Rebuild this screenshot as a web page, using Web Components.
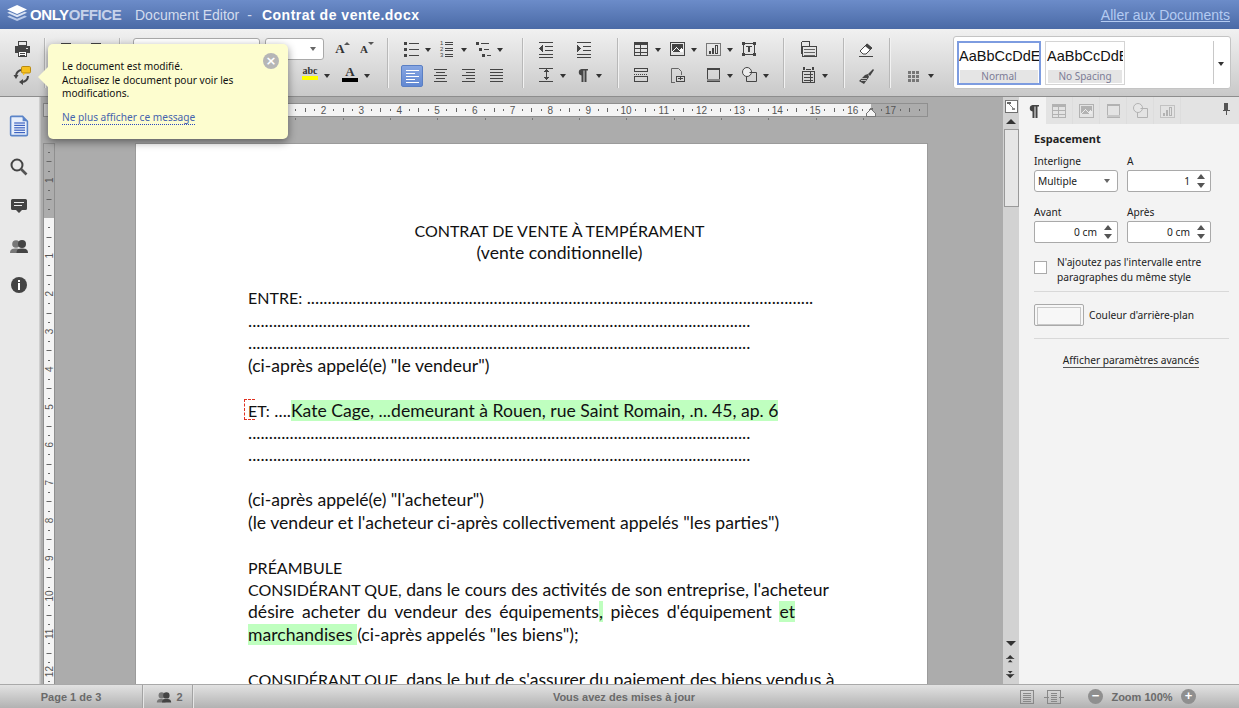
<!DOCTYPE html>
<html lang="fr">
<head>
<meta charset="utf-8">
<title>ONLYOFFICE Document Editor</title>
<style>
  html, body { margin: 0; height: 100%; overflow: hidden; }
  oo-app { height: 708px; }
</style>
</head>
<body>
<oo-app></oo-app>
<script>
const UI_FONT = `"Noto Sans", "Liberation Sans", sans-serif`
const DARK = "#444"

// Little helpers for the icon markup.
const hl = (y, x1, x2, c = DARK) => `<rect x="${x1}" y="${y}" width="${x2 - x1}" height="1" fill="${c}"/>`
const box = (x, y, w, h, c = DARK) => `<rect x="${x}.5" y="${y}.5" width="${w - 1}" height="${h - 1}" fill="none" stroke="${c}"/>`
const fill = (x, y, w, h, c = DARK) => `<rect x="${x}" y="${y}" width="${w}" height="${h}" fill="${c}"/>`
const lines = (ys, x1, x2, c) => ys.map(y => hl(y, x1, x2, c)).join("")
const tiny = (x, y, t) => `<text x="${x}" y="${y}" font-family="Liberation Sans, sans-serif" font-size="6" fill="${DARK}">${t}</text>`

const ICONS = {
  print: box(6, 2, 9, 5) + fill(3, 7, 15, 7) + fill(14, 9, 2, 1, "#ddd") + fill(6, 12, 9, 6, "#fff") + box(6, 12, 9, 6) + hl(14, 8, 13) + hl(16, 8, 13),
  sync: `<path d="M10 5a6 6 0 0 0-6 6M16 11a6 6 0 0 1-6 6" fill="none" stroke="${DARK}" stroke-width="2"/><path d="M1.500 10h5L4 14zM11 14v6l-4-3z" fill="${DARK}"/><rect x="9.500" y="1.500" width="9" height="6.500" rx="1.200" fill="#f5c020" stroke="#b98a10"/><path d="M11 8v2.500L14 8z" fill="#f5c020"/>`,
  behind: fill(5, 4, 10, 2),
  bullets: [3, 9, 15].map(y => fill(3, y, 3, 3) + hl(y + 1, 8, 18)).join(""),
  numbers: tiny(3, 6, 1) + tiny(3, 12, 2) + tiny(3, 18, 3) + lines([3, 5, 9, 11, 15, 17], 8, 16),
  multi: fill(3, 3, 3, 3) + hl(4, 8, 16) + fill(6, 9, 3, 3) + hl(10, 11, 16) + fill(9, 15, 3, 3) + hl(16, 14, 18),
  left: hl(4, 4, 17, "#fff") + hl(7, 4, 13, "#fff") + hl(10, 4, 17, "#fff") + hl(13, 4, 13, "#fff") + hl(16, 4, 17, "#fff"),
  center: hl(4, 4, 17) + hl(7, 6, 15) + hl(10, 4, 17) + hl(13, 6, 15) + hl(16, 4, 17),
  right: hl(4, 4, 17) + hl(7, 8, 17) + hl(10, 4, 17) + hl(13, 8, 17) + hl(16, 4, 17),
  justify: lines([4, 7, 10, 13, 16], 4, 17),
  outdent: lines([3, 15, 18], 3, 17) + hl(7, 9, 17) + hl(11, 9, 17) + `<path d="M7 6v7l-4-3.500z" fill="${DARK}"/>`,
  indent: lines([3, 15, 18], 3, 17) + hl(7, 9, 17) + hl(11, 9, 17) + `<path d="M3 6v7l4-3.500z" fill="${DARK}"/>`,
  spacing: hl(3, 3, 17) + hl(16, 3, 17) + fill(10, 5, 1, 9) + `<path d="M10.500 4l-2.500 3h5zM10.500 15l-2.500-3h5z" fill="${DARK}"/>`,
  para: `<path d="M8 4h8v1.500h-1.500V17h-2V5.500h-1V17h-2v-6.500a3.300 3.300 0 0 1 0-6.500z" fill="${DARK}"/>`,
  table: box(3, 3, 14, 14) + fill(3, 3, 14, 3) + hl(9, 3, 17) + hl(13, 3, 17) + fill(9, 3, 1, 14),
  image: box(3, 3, 15, 14) + fill(5, 5, 11, 8) + `<path d="M5 13l4-5 3 3 2-2 2 2v2z" fill="#fff"/><path d="M6 13l3-4 4 4z" fill="${DARK}"/>`,
  chart: box(3, 4, 15, 13, "#777") + fill(6, 12, 2, 3) + fill(9, 9, 2, 6) + box(12, 6, 3, 9),
  textbox: box(4, 4, 12, 12) + fill(3, 3, 3, 3) + fill(14, 3, 3, 3) + fill(3, 14, 3, 3) + fill(14, 14, 3, 3) + hl(7, 7, 13) + fill(9, 7, 2, 6),
  columns: box(3, 11, 14, 6) + box(3, 3, 14, 4) + `<path d="M3 9.500h14" stroke="${DARK}" stroke-dasharray="1 1"/>`,
  pagebreak: `<path d="M4.500 17.500V3.500h7l3 3V10" fill="none" stroke="#666"/>` + hl(17, 4, 8, "#666") + box(9, 11, 9, 6) + hl(13, 11, 16) + fill(13, 12, 1, 3),
  header: box(4, 3, 13, 14) + fill(4, 3, 13, 2) + fill(4, 14, 13, 2, "#888"),
  shape: `<circle cx="8" cy="7" r="4.500" fill="#eee" stroke="${DARK}"/><path d="M10.500 7.500h7v9h-10v-5" fill="none" stroke="${DARK}"/>`,
  merge: box(4, 7, 15, 11) + lines([10, 13, 16], 6, 17, "#666") + `<path d="M3.500 2.500h8v4" fill="none" stroke="${DARK}"/>` + fill(3, 3, 1, 12),
  mailmerge: fill(5, 2, 2, 3) + fill(14, 2, 2, 3) + hl(4, 8, 13) + box(4, 6, 13, 12) + lines([9, 12, 15], 6, 15) + fill(12, 6, 1, 12),
  eraser: `<path d="M4 12l7-7 5 4-6 6H7z" fill="#fff" stroke="${DARK}"/><path d="M9 7l2-2.500 5 4.500-2 2z" fill="${DARK}"/>` + hl(17, 3, 17),
  brush: `<path d="M12 9l2 2 4-6-1-1zM12 9l-3 1-6 6 5 3 5-7z" fill="${DARK}"/>` + hl(13, 5, 11, "#bbb") + hl(15, 5, 10, "#bbb"),
  grid: [6, 10, 14].map(y => [4, 8, 12].map(x => fill(x, y, 3, 3, "#777")).join("")).join(""),
  pin: fill(8, 3, 5, 8, "#555") + fill(6, 11, 9, 2, "#555") + fill(10, 13, 1, 5, "#555"),
  fit: fill(2, 2, 16, 16, "#fff") + box(2, 2, 16, 16, "#555") + fill(5, 5, 5, 3, "#666") + fill(11, 12, 4, 3, "#888") + `<path d="M8 8l5 5" stroke="#666"/>`,
  plain: box(3, 3, 14, 14, "#888") + lines([6, 8, 10, 12, 14], 6, 14, "#888"),
  wide: box(3, 3, 14, 14, "#888") + lines([6, 8, 10, 12, 14], 7, 13, "#888") + hl(10, 0, 5, "#888") + hl(10, 15, 20, "#888"),
  filepane: `<path d="M3 3a1 1 0 0 1 1-1h9l4 4v11a1 1 0 0 1-1 1H4a1 1 0 0 1-1-1z" fill="#e8effb" stroke="#5b84c8" stroke-width="1.300"/><path d="M13 2v4h4z" fill="#5b84c8"/>` + lines([7, 9, 11, 13, 15], 6, 15, "#3e63c0"),
  search: `<circle cx="8" cy="8" r="5.500" fill="none" stroke="${DARK}" stroke-width="2"/><path d="M12 12l5.500 5.500" stroke="#555" stroke-width="2.600"/>`,
  comment: `<path d="M2 4.500a1.500 1.500 0 0 1 1.500-1.500h13a1.500 1.500 0 0 1 1.500 1.500v8a1.500 1.500 0 0 1-1.500 1.500H13l-3 3-3-3H3.500A1.500 1.500 0 0 1 2 12.500z" fill="${DARK}"/>` + hl(6, 5, 15, "#eee") + hl(9, 5, 13, "#eee"),
  people: `<circle cx="7" cy="8" r="3.800" fill="#777"/><path d="M1 17c0-4 3-4.500 6-4.500s5 1 5 4.500z" fill="#777"/><circle cx="13" cy="8" r="4" fill="${DARK}"/><path d="M7.500 17c0-4 2.500-4.500 5.500-4.500s6 .5 6 4.500z" fill="${DARK}"/>`,
  info: `<circle cx="10" cy="10" r="8" fill="${DARK}"/>` + fill(9, 5, 2, 2, "#fff") + fill(9, 8, 2, 7, "#fff"),
  pageup: `<path d="M5 9l4-4 4 4z" fill="#333"/>` + fill(4, 9, 10, 1, "#333") + `<path d="M6 14l3-3 3 3z" fill="#333"/>`,
  pagedown: `<path d="M6 5l3 3 3-3z" fill="#333"/>` + fill(4, 9, 10, 1, "#333") + `<path d="M5 10l4 4 4-4z" fill="#333"/>`,
  logo: `<path d="M11 1l9 4-9 4-9-4z" fill="#fff"/><path d="M2 8l2-1 7 3 7-3 2 1-9 4z" fill="#dbe4f4"/><path d="M2 11.500l2-1 7 3 7-3 2 1-9 4z" fill="#b9c9e8"/>`
}

function icon(name, size = 20) {
  return `<svg width="${size}" height="${size}" viewBox="0 0 20 20" shape-rendering="${/sync|para|shape|eraser|brush|filepane|search|comment|people|info|logo|page/.test(name) ? "auto" : "crispEdges"}">${ICONS[name] || ""}</svg>`
}

function define(name, css, html, init) {
  // Every element here is the same thing: a shadow root with its own style.
  customElements.define(name, class extends HTMLElement {
    constructor() {
      super()
      this.attachShadow({ mode: "open" })
    }

    connectedCallback() {
      const markup = typeof html === "function" ? html(this) : html
      this.shadowRoot.innerHTML = `<style>${css}</style>${markup}`
      if (init) {
        init(this)
      }
    }
  })
}

define("oo-icon", `:host { display: inline-flex; }`, el => icon(el.getAttribute("name"), +el.getAttribute("size") || 20))

define("oo-caret", `
  :host { display: inline-block; width: 0; height: 0; border: 3.500px solid transparent; border-top: 4px solid #333; border-bottom: 0; }
`, "")

define("oo-tool", `
  :host { display: inline-flex; align-items: center; flex: none; height: 26px; position: relative; }
  .glyph { width: 20px; height: 20px; display: flex; }
  oo-caret { position: absolute; left: 24px; top: 12px; }
`, el => `
  <div class="glyph"><slot>${el.hasAttribute("icon") ? icon(el.getAttribute("icon")) : ""}</slot></div>
  ${el.hasAttribute("caret") ? "<oo-caret></oo-caret>" : ""}
`, el => {
  el.style.width = `${el.getAttribute("w") || 36}px`
})

define("oo-row", `:host { display: flex; height: 26px; align-items: center; }`, "<slot></slot>")

define("oo-group", `:host { display: block; flex: none; }`, "<slot></slot>")

define("oo-sep", `
  :host { display: block; flex: none; width: 1px; height: 50px; margin-top: 2px; background: #b8b8b8; box-shadow: 1px 0 0 #f2f2f2; }
`, "")

define("oo-header", `
  :host {
    display: flex; align-items: center; height: 29px; flex: none; padding: 0 9px 0 5px;
    background: linear-gradient(#6c8cc9, #4a6aa6);
    font: 14px "Liberation Sans", sans-serif; color: #d3dcee;
  }
  .logo { display: flex; margin-right: 3px; }
  .brand { font-weight: bold; font-size: 15px; letter-spacing: -0.400px; color: #fff; width: 104px; }
  .brand span { color: #c6d2ea; }
  .dash { margin: 0 7px 0 8px; padding-right: 3px; }
  .title { font-weight: bold; color: #fff; letter-spacing: 0.500px; }
  a { margin-left: auto; color: #b4cbf2; text-decoration: underline; }
`, `
  <div class="logo">${icon("logo", 22)}</div>
  <div class="brand">ONLY<span>OFFICE</span></div>
  <div style="margin-left:1px">Document Editor</div>
  <div class="dash">-</div>
  <div class="title">Contrat de vente.docx</div>
  <a>Aller aux Documents</a>
`)

define("oo-combo", `
  :host {
    display: flex; align-items: center; box-sizing: border-box; height: 22px; flex: none;
    background: #fff; border: 1px solid #a9a9a9; border-radius: 3px; position: relative;
    font: 10.200px ${UI_FONT}; color: #222;
  }
  span { padding-left: 3px; }
  i { position: absolute; right: 7px; top: 8px; border: 3.500px solid transparent; border-top: 4px solid #666; border-bottom: 0; }
`, `<span><slot></slot></span><i></i>`)

define("oo-styles", `
  :host {
    display: flex; box-sizing: border-box; width: 278px; height: 53px; flex: none; background: #fff;
    border: 1px solid #c4c4c4; border-radius: 3px; padding: 4px 3px; gap: 4px; position: relative;
  }
  .more { position: absolute; right: 16px; top: 4px; bottom: 4px; width: 1px; background: #c8c8c8; }
  oo-caret { position: absolute; right: 6px; top: 25px; }
`, `<slot></slot><div class="more"></div><oo-caret></oo-caret>`)

define("oo-style-tile", `
  :host {
    display: flex; flex-direction: column; box-sizing: border-box; height: 44px; flex: none; overflow: hidden;
    border: 1px solid #d4d4d4; padding: 1px;
    font-family: "Liberation Sans", sans-serif;
  }
  :host([on]) { border: 2px solid #7d9ce0; padding: 0; }
  .sample { flex: 1; font-size: 14.500px; line-height: 26px; white-space: nowrap; overflow: hidden; color: #111; }
  .name { height: 13px; margin: 0 1px; background: #e5e5e5; color: #7c7c96; font: 10px/13px ${UI_FONT}; text-align: center; }
`, `<div class="sample">AaBbCcDdEe</div><div class="name"><slot></slot></div>`)

define("oo-toolbar", `
  :host {
    display: flex; flex: none; box-sizing: border-box; height: 68px; padding-top: 7px;
    background: linear-gradient(#f1f1f1, #c9c9c9);
    border-bottom: 1px solid #8d8d8d;
  }
  .serif { font: bold 13px/20px "Liberation Serif", serif; color: #333; position: relative; display: block; width: 20px; text-align: center; }
  .small { font-size: 11px; }
  .up::after, .down::after { content: ""; position: absolute; right: 0; top: 3px; border: 3px solid transparent; }
  .up::after { border-bottom: 3px solid #555; border-top: 0; }
  .down::after { border-top: 3px solid #555; border-bottom: 0; }
  .swatch { display: block; width: 20px; text-align: center; font: bold 10px/11px "Liberation Serif", serif; color: #333; }
  .swatch b { display: block; height: 4px; margin: 0 2px; }
  .big { font-size: 13px; line-height: 13px; }
  .on { width: 22px; height: 22px; margin-left: 3px; margin-right: 3px; box-sizing: border-box; border: 1px solid #5a7fc4; border-radius: 2px; background: linear-gradient(#87a6e2, #6288d2); padding: 0; display: flex; }
`, `
  <oo-group style="width:44px"><oo-row style="padding-left:12px"><oo-tool icon="print" w="20"></oo-tool></oo-row><oo-row style="padding-left:12px"><oo-tool icon="sync" w="20"></oo-tool></oo-row></oo-group>
  <oo-sep></oo-sep>
  <oo-group style="width:74px"><oo-row style="padding-left:11px"><oo-tool icon="behind" w="30"></oo-tool><oo-tool icon="behind" w="20"></oo-tool></oo-row></oo-group>
  <oo-sep></oo-sep>
  <oo-group style="width:267px">
    <oo-row style="padding-left:13px">
      <oo-combo style="width:127px"></oo-combo>
      <oo-combo style="width:59px;margin-left:5px"></oo-combo>
      <oo-tool w="24" style="margin-left:6px"><span class="serif up">A</span></oo-tool>
      <oo-tool w="24"><span class="serif small down">A</span></oo-tool>
    </oo-row>
    <oo-row style="padding-left:180px">
      <oo-tool caret w="40"><span class="swatch">abc<b style="background:#ff0"></b></span></oo-tool>
      <oo-tool caret w="40"><span class="swatch big">A<b style="background:#000"></b></span></oo-tool>
    </oo-row>
  </oo-group>
  <oo-sep></oo-sep>
  <oo-group style="width:134px">
    <oo-row style="padding-left:13px"><oo-tool icon="bullets" caret></oo-tool><oo-tool icon="numbers" caret></oo-tool><oo-tool icon="multi" caret></oo-tool></oo-row>
    <oo-row style="padding-left:10px">
      <oo-tool w="28"><span class="on">${icon("left")}</span></oo-tool>
      <oo-tool w="28" style="padding-left:4px;box-sizing:border-box"><oo-icon name="center"></oo-icon></oo-tool>
      <oo-tool w="28" style="padding-left:4px;box-sizing:border-box"><oo-icon name="right"></oo-icon></oo-tool>
      <oo-tool w="28" style="padding-left:4px;box-sizing:border-box"><oo-icon name="justify"></oo-icon></oo-tool>
    </oo-row>
  </oo-group>
  <oo-sep></oo-sep>
  <oo-group style="width:94px">
    <oo-row style="padding-left:13px"><oo-tool icon="outdent" w="38"></oo-tool><oo-tool icon="indent" w="38"></oo-tool></oo-row>
    <oo-row style="padding-left:13px"><oo-tool icon="spacing" caret></oo-tool><oo-tool icon="para" caret></oo-tool></oo-row>
  </oo-group>
  <oo-sep></oo-sep>
  <oo-group style="width:165px">
    <oo-row style="padding-left:13px"><oo-tool icon="table" caret></oo-tool><oo-tool icon="image" caret></oo-tool><oo-tool icon="chart" caret></oo-tool><oo-tool icon="textbox"></oo-tool></oo-row>
    <oo-row style="padding-left:13px"><oo-tool icon="columns"></oo-tool><oo-tool icon="pagebreak"></oo-tool><oo-tool icon="header" caret></oo-tool><oo-tool icon="shape" caret></oo-tool></oo-row>
  </oo-group>
  <oo-sep></oo-sep>
  <oo-group style="width:59px">
    <oo-row style="padding-left:14px"><oo-tool icon="merge"></oo-tool></oo-row>
    <oo-row style="padding-left:14px"><oo-tool icon="mailmerge" caret></oo-tool></oo-row>
  </oo-group>
  <oo-sep></oo-sep>
  <oo-group style="width:45px">
    <oo-row style="padding-left:12px"><oo-tool icon="eraser" w="20"></oo-tool></oo-row>
    <oo-row style="padding-left:12px"><oo-tool icon="brush" w="20"></oo-tool></oo-row>
  </oo-group>
  <oo-sep></oo-sep>
  <oo-group style="width:63px">
    <oo-row></oo-row>
    <oo-row style="padding-left:14px"><oo-tool icon="grid" caret></oo-tool></oo-row>
  </oo-group>
  <oo-styles>
    <oo-style-tile on style="width:84px">Normal</oo-style-tile>
    <oo-style-tile style="width:80px">No Spacing</oo-style-tile>
  </oo-styles>
`)

define("oo-sidebar", `
  :host {
    display: flex; flex-direction: column; align-items: center; flex: none; box-sizing: border-box;
    width: 40px; padding: 17px 2px 0 0; gap: 19.500px;
    background: #e9e9e9; border-right: 1px solid #cfcfcf;
  }
`, `
  <oo-icon name="filepane" size="24" style="margin-bottom:-1px"></oo-icon>
  <oo-icon name="search"></oo-icon>
  <oo-icon name="comment"></oo-icon>
  <oo-icon name="people"></oo-icon>
  <oo-icon name="info"></oo-icon>
`)

// Rulers are drawn once from the cm step; 37.8px to the centimetre, 0 at the text margin.
const CM = 37.8
const RULER_TEXT = `font-family="Liberation Sans, sans-serif" font-size="10" fill="#555" text-anchor="middle"`

function hRuler() {
  const zero = 113
  let out = `<rect x="0.500" y="0.500" width="792" height="13" fill="none" stroke="#8f8f8f"/>`
  out += `<rect x="${zero}" y="1" width="623" height="12" fill="#f4f4f4"/>`
  for (let i = -2; i <= 18; i++) {
    const x = zero + i * CM
    // Numbers left of 2 sit under the tip, so they are never seen.
    if (i >= 2 && x < 790) {
      out += `<text x="${x}" y="11" ${RULER_TEXT}>${i}</text>`
    }
    for (const [f, h] of [[0.25, 2], [0.5, 4], [0.75, 2]]) {
      const tx = Math.round(x + f * CM)
      if (tx > 2 && tx < 790) {
        out += `<rect x="${tx}" y="${7 - h / 2}" width="1" height="${h}" fill="#666"/>`
      }
    }
  }
  for (let i = 1; i <= 13; i++) {
    out += `<rect x="${Math.round(zero + i * 47.3)}" y="15" width="1" height="2" fill="#777"/>`
  }
  out += `<path d="M731.500 13.500v-3l4.500-5 4.500 5v3z" fill="#f4f4f4" stroke="#777"/>`
  return `<svg width="793" height="18" shape-rendering="crispEdges">${out}</svg>`
}

function vRuler() {
  const zero = 75
  let out = `<rect x="0.500" y="0.500" width="11" height="600" fill="none" stroke="#8f8f8f"/>`
  out += `<rect x="1" y="${zero}" width="10" height="530" fill="#f4f4f4"/>`
  for (let i = -2; i <= 13; i++) {
    const y = zero + i * CM
    if (i !== 0 && y > 5 && i <= 12) {
      out += `<text transform="translate(9.500 ${y}) rotate(-90)" ${RULER_TEXT}>${Math.abs(i)}</text>`
    }
    for (const [f, w] of [[0.25, 2], [0.5, 5], [0.75, 2]]) {
      const ty = Math.round(y + f * CM)
      if (ty > 2) {
        out += `<rect x="${6 - w / 2}" y="${ty}" width="${w}" height="1" fill="#666"/>`
      }
    }
  }
  return `<svg width="12" height="601">${out}</svg>`
}

define("oo-hruler", `
  :host { display: flex; flex: none; height: 46px; box-sizing: border-box; padding: 6px 0 0 2px; }
  .corner { width: 12px; height: 14px; box-sizing: border-box; border: 1px solid #888; background: #c9c9c9; margin-right: 80px; }
  svg { display: block; overflow: visible; }
`, () => `<div class="corner"></div>${hRuler()}`)

define("oo-vruler", `:host { display: block; flex: none; width: 12px; margin-left: 2px; }`, () => vRuler())

define("oo-page", `
  :host {
    display: block; flex: none; box-sizing: border-box; width: 793px; height: 700px; margin-left: 80px;
    padding: 76px 97px 0 112px; background: #fff; border: 1px solid #9b9b9b; border-bottom: 0;
    font: 17.600px/22.450px Lato, "Open Sans", sans-serif; color: #111; white-space: nowrap;
  }
`, "<slot></slot>")

define("oo-line", `
  :host { display: block; height: 22.450px; }
  :host([center]) { text-align: center; width: 623px; }
  :host([just]) { white-space: normal; text-align: justify; text-align-last: justify; }
`, "<slot></slot>")

define("oo-hl", `:host { background: #bfffbf; }`, "<slot></slot>")

define("oo-mark", `
  :host { position: relative; }
  i { position: absolute; left: -4px; top: -2px; width: 10px; height: 19px; border: 1px dashed #e03020; border-right: 0; }
`, "<i></i><slot></slot>")

define("oo-scrollbar", `
  :host {
    display: flex; flex-direction: column; align-items: center; flex: none; width: 16px;
    background: #d2d2d2; position: relative;
  }
  .fit { height: 16px; margin-top: 1px; }
  .up { margin-top: 5px; border: 5px solid transparent; border-top: 0; border-bottom: 5px solid #333; }
  .thumb { box-sizing: border-box; width: 15px; height: 78px; margin-top: 5px; background: #e6e6e6; border: 1px solid #999; }
  .down { margin-top: auto; border: 5px solid transparent; border-bottom: 0; border-top: 5px solid #333; }
  .pg { height: 16px; display: flex; }
  .pg:last-child { margin-bottom: 1px; }
`, `
  <div class="fit">${icon("fit", 16)}</div>
  <div class="up"></div>
  <div class="thumb"></div>
  <div class="down" style="margin-bottom:5px"></div>
  <div class="pg">${icon("pageup", 16)}</div>
  <div class="pg">${icon("pagedown", 16)}</div>
`)

define("oo-spin", `
  :host {
    display: flex; align-items: center; justify-content: flex-end; box-sizing: border-box; height: 22px;
    border: 1px solid #a9a9a9; border-radius: 2px; background: #fff; padding-right: 20px; position: relative;
  }
  .ar { position: absolute; right: 5px; width: 0; border: 4px solid transparent; }
  .u { top: 3px; border-top: 0; border-bottom: 5px solid #555; }
  .d { bottom: 3px; border-bottom: 0; border-top: 5px solid #555; }
`, `<slot></slot><i class="ar u"></i><i class="ar d"></i>`)

define("oo-panel", `
  :host {
    display: flex; flex-direction: column; flex: 1; background: #f3f3f3;
    font: 10.200px/14px ${UI_FONT}; color: #222; min-width: 0;
  }
  .tabs { display: flex; height: 27px; flex: none; background: #e3e3e3; align-items: center; }
  .tab { display: flex; align-items: center; justify-content: center; box-sizing: border-box; width: 27px; height: 27px; border-right: 1px solid #d2d2d2; opacity: .3; }
  .tab.on { background: #f3f3f3; opacity: 1; border-right: 0; }
  .pin { margin-left: auto; margin-right: 5px; }
  .body { display: flex; flex-direction: column; padding: 8px 10px 0 15px; }
  h3 { font-size: 11px; line-height: 14px; margin: 0 0 8px; font-weight: bold; color: #222; }
  .pair { display: grid; grid-template-columns: 84px 84px; column-gap: 9px; margin-bottom: 13px; }
  label { display: block; height: 16px; line-height: 14px; }
  .check { display: flex; gap: 10px; margin-top: 2px; line-height: 15px; }
  .check i { width: 13px; height: 13px; box-sizing: border-box; margin-top: 6px; background: #fff; border: 1px solid #aaa; flex: none; }
  hr { width: 100%; border: 0; border-top: 1px solid #d8d8d8; margin: 6px 0 12px; }
  .color { display: flex; align-items: center; gap: 5px; }
  .swatch { width: 50px; height: 22px; box-sizing: border-box; border: 1px solid #a9a9a9; border-radius: 2px; padding: 2px; background: #f7f7f7; }
  .swatch i { display: block; height: 16px; border: 1px solid #c8c8c8; }
  a { align-self: center; margin-top: 1px; color: #222; border-bottom: 1px solid #555; line-height: 13px; margin-left: -1px; }
`, `
  <div class="tabs">
    <div class="tab on">${icon("para", 20)}</div>
    <div class="tab">${icon("table", 20)}</div>
    <div class="tab">${icon("image", 20)}</div>
    <div class="tab">${icon("header", 20)}</div>
    <div class="tab">${icon("shape", 20)}</div>
    <div class="tab">${icon("chart", 20)}</div>
    <div class="pin">${icon("pin", 16)}</div>
  </div>
  <div class="body">
    <h3>Espacement</h3>
    <div class="pair">
      <div><label>Interligne</label><oo-combo>Multiple</oo-combo></div>
      <div><label>A</label><oo-spin>1</oo-spin></div>
    </div>
    <div class="pair" style="margin-bottom:10px">
      <div><label>Avant</label><oo-spin>0 cm</oo-spin></div>
      <div><label>Après</label><oo-spin>0 cm</oo-spin></div>
    </div>
    <div class="check"><i></i><div>N'ajoutez pas l'intervalle entre<br>paragraphes du même style</div></div>
    <hr>
    <div class="color"><div class="swatch"><i></i></div><div>Couleur d'arrière-plan</div></div>
    <hr style="margin-top:12px;margin-bottom:14px">
    <a>Afficher paramètres avancés</a>
  </div>
`)

define("oo-status", `
  :host {
    display: flex; align-items: center; flex: none; height: 24px; box-sizing: border-box; position: relative;
    background: linear-gradient(#e2e2e2, #b2b2b2); border-top: 1px solid #a9a9a9;
    font: bold 11px "Liberation Sans", sans-serif; color: #6a6a6a;
  }
  .cell { display: flex; align-items: center; justify-content: center; height: 100%; box-sizing: border-box; border-right: 1px solid #a3a3a3; box-shadow: 1px 0 0 #e6e6e6; flex: none; }
  .msg { flex: 1; text-align: center; padding-left: 38px; }
  .zoom { display: flex; align-items: center; gap: 8px; flex: none; padding-right: 43px; }
  .view { display: flex; gap: 7px; margin-right: 24px; }
  .round { width: 15px; height: 15px; border-radius: 50%; background: #8f8f8f; color: #fff; font: bold 13px/14px "Liberation Sans", sans-serif; text-align: center; }
  .n { margin-left: 4px; }
  .z { width: 62px; text-align: center; }
`, `
  <div class="cell" style="width:143px">Page 1 de 3</div>
  <div class="cell" style="width:50px;padding-left:4px">${icon("people", 16)}<span class="n">2</span></div>
  <div class="msg">Vous avez des mises à jour</div>
  <div class="view">${icon("plain")}${icon("wide")}</div>
  <div class="zoom"><div class="round">−</div><div class="z">Zoom 100%</div><div class="round">+</div></div>
`)

define("oo-tip", `
  :host {
    position: absolute; left: 48px; top: 44px; width: 240px; height: 95px; box-sizing: border-box;
    padding: 16px 14px 0; background: #fdfdcf; border-radius: 5px; box-shadow: 0 3px 9px rgba(0, 0, 0, .45);
    font: 10.150px/13.500px ${UI_FONT}; color: #111;
  }
  :host::before {
    content: ""; position: absolute; left: -10px; top: 23px; border: 10px solid transparent;
    border-left: 0; border-right: 10px solid #fdfdcf;
  }
  a { display: inline-block; margin-top: 10px; color: #4563ad; border-bottom: 1px dotted #2b49c0; line-height: 13px; }
  .close {
    position: absolute; right: 9px; top: 9px; width: 16px; height: 16px; border-radius: 50%; background: #b6b6b6;
    color: #fff; font: bold 13px/16px "DejaVu Sans", sans-serif; text-align: center;
  }
`, `
  <div class="close">×</div>
  <div>Le document est modifié.</div>
  <div>Actualisez le document pour voir les</div>
  <div>modifications.</div>
  <a>Ne plus afficher ce message</a>
`)

const DOTS = ".".repeat(121)

define("oo-app", `
  :host { display: flex; flex-direction: column; position: relative; overflow: hidden; }
  .main { display: flex; flex: 1; min-height: 0; }
  .canvas { display: flex; flex-direction: column; flex: none; width: 963px; background: #acacac; overflow: hidden; border-left: 1px solid #bdbdbd; box-sizing: border-box; }
  .work { display: flex; flex: 1; min-height: 0; }
  .caps { font-size: 16px; }
`, `
  <oo-header></oo-header>
  <oo-toolbar></oo-toolbar>
  <div class="main">
    <oo-sidebar></oo-sidebar>
    <div class="canvas">
      <oo-hruler></oo-hruler>
      <div class="work">
        <oo-vruler></oo-vruler>
        <oo-page>
          <oo-line center class="caps">CONTRAT DE VENTE À TEMPÉRAMENT</oo-line>
          <oo-line center>(vente conditionnelle)</oo-line>
          <oo-line></oo-line>
          <oo-line><span class="caps">ENTRE:</span> ${DOTS}.</oo-line>
          <oo-line>${DOTS}</oo-line>
          <oo-line>${DOTS}</oo-line>
          <oo-line>(ci-après appelé(e) "le vendeur")</oo-line>
          <oo-line></oo-line>
          <oo-line><span class="caps"><oo-mark>E</oo-mark>T:</span> ....<oo-hl>Kate Cage, ...demeurant à Rouen, rue Saint Romain, .n. 45, ap. 6</oo-hl></oo-line>
          <oo-line>${DOTS}</oo-line>
          <oo-line>${DOTS}</oo-line>
          <oo-line></oo-line>
          <oo-line>(ci-après appelé(e) "l'acheteur")</oo-line>
          <oo-line>(le vendeur et l'acheteur ci-après collectivement appelés "les parties")</oo-line>
          <oo-line></oo-line>
          <oo-line class="caps">PRÉAMBULE</oo-line>
          <oo-line><span class="caps">CONSIDÉRANT QUE,</span> dans le cours des activités de son entreprise, l'acheteur</oo-line>
          <oo-line just style="width:547px">désire acheter du vendeur des équipements<oo-hl>,</oo-hl> pièces d'équipement <oo-hl>et</oo-hl></oo-line>
          <oo-line><oo-hl>marchandises </oo-hl>(ci-après appelés "les biens");</oo-line>
          <oo-line></oo-line>
          <oo-line><span class="caps">CONSIDÉRANT QUE,</span> dans le but de s'assurer du paiement des biens vendus à</oo-line>
        </oo-page>
      </div>
    </div>
    <oo-scrollbar></oo-scrollbar>
    <oo-panel></oo-panel>
  </div>
  <oo-status></oo-status>
  <oo-tip></oo-tip>
`)
</script>
</body>
</html>
